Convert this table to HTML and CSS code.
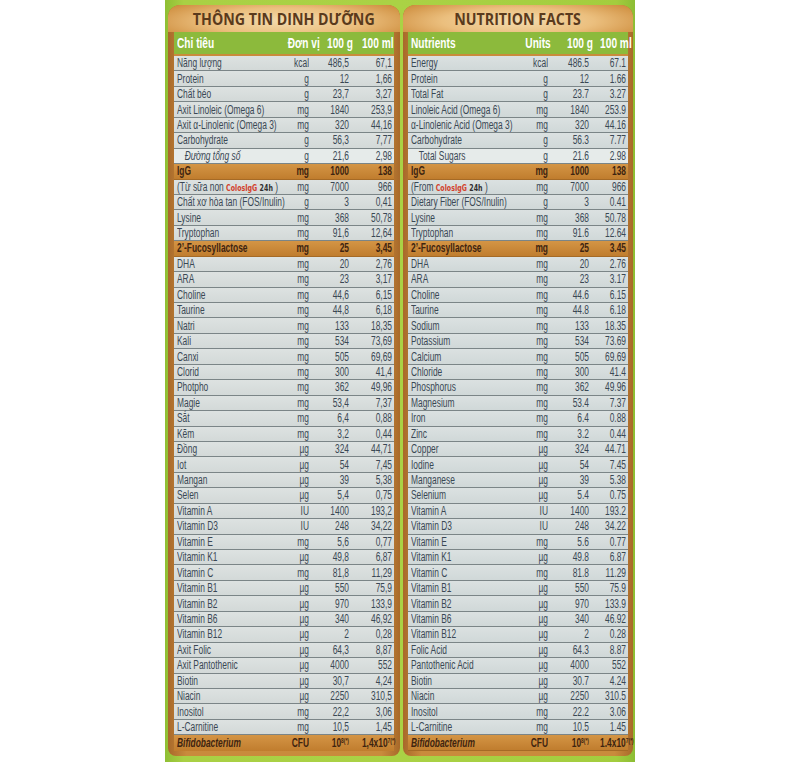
FILE: index.html
```html
<!DOCTYPE html>
<html lang="vi">
<head>
<meta charset="utf-8">
<title>Thông tin dinh dưỡng</title>
<link rel="stylesheet" href="styles.css">
</head>
<body>
<div class="page">
  <div class="panel">
    <section class="card card-left">
      <div class="title"><span>THÔNG TIN DINH DƯỠNG</span></div>
      <div class="row head"><span>Chỉ tiêu</span><span>Đơn vị</span><span>100 g</span><span>100 ml</span></div>
      <div class="row"><span>Năng lượng</span><span>kcal</span><span>486,5</span><span>67,1</span></div>
      <div class="row"><span>Protein</span><span>g</span><span>12</span><span>1,66</span></div>
      <div class="row"><span>Chất béo</span><span>g</span><span>23,7</span><span>3,27</span></div>
      <div class="row"><span>Axit Linoleic (Omega 6)</span><span>mg</span><span>1840</span><span>253,9</span></div>
      <div class="row"><span>Axit α-Linolenic (Omega 3)</span><span>mg</span><span>320</span><span>44,16</span></div>
      <div class="row"><span>Carbohydrate</span><span>g</span><span>56,3</span><span>7,77</span></div>
      <div class="row sub"><span>Đường tổng số</span><span>g</span><span>21,6</span><span>2,98</span></div>
      <div class="row hl"><span>IgG</span><span>mg</span><span>1000</span><span>138</span></div>
      <div class="row"><span>(Từ sữa non <i class="colos">ColosIgG</i> <b class="h24">24h</b> )</span><span>mg</span><span>7000</span><span>966</span></div>
      <div class="row"><span>Chất xơ hòa tan (FOS/Inulin)</span><span>g</span><span>3</span><span>0,41</span></div>
      <div class="row"><span>Lysine</span><span>mg</span><span>368</span><span>50,78</span></div>
      <div class="row"><span>Tryptophan</span><span>mg</span><span>91,6</span><span>12,64</span></div>
      <div class="row hl"><span>2’-Fucosyllactose</span><span>mg</span><span>25</span><span>3,45</span></div>
      <div class="row"><span>DHA</span><span>mg</span><span>20</span><span>2,76</span></div>
      <div class="row"><span>ARA</span><span>mg</span><span>23</span><span>3,17</span></div>
      <div class="row"><span>Choline</span><span>mg</span><span>44,6</span><span>6,15</span></div>
      <div class="row"><span>Taurine</span><span>mg</span><span>44,8</span><span>6,18</span></div>
      <div class="row"><span>Natri</span><span>mg</span><span>133</span><span>18,35</span></div>
      <div class="row"><span>Kali</span><span>mg</span><span>534</span><span>73,69</span></div>
      <div class="row"><span>Canxi</span><span>mg</span><span>505</span><span>69,69</span></div>
      <div class="row"><span>Clorid</span><span>mg</span><span>300</span><span>41,4</span></div>
      <div class="row"><span>Photpho</span><span>mg</span><span>362</span><span>49,96</span></div>
      <div class="row"><span>Magie</span><span>mg</span><span>53,4</span><span>7,37</span></div>
      <div class="row"><span>Sắt</span><span>mg</span><span>6,4</span><span>0,88</span></div>
      <div class="row"><span>Kẽm</span><span>mg</span><span>3,2</span><span>0,44</span></div>
      <div class="row"><span>Đồng</span><span>µg</span><span>324</span><span>44,71</span></div>
      <div class="row"><span>Iot</span><span>µg</span><span>54</span><span>7,45</span></div>
      <div class="row"><span>Mangan</span><span>µg</span><span>39</span><span>5,38</span></div>
      <div class="row"><span>Selen</span><span>µg</span><span>5,4</span><span>0,75</span></div>
      <div class="row"><span>Vitamin A</span><span>IU</span><span>1400</span><span>193,2</span></div>
      <div class="row"><span>Vitamin D3</span><span>IU</span><span>248</span><span>34,22</span></div>
      <div class="row"><span>Vitamin E</span><span>mg</span><span>5,6</span><span>0,77</span></div>
      <div class="row"><span>Vitamin K1</span><span>µg</span><span>49,8</span><span>6,87</span></div>
      <div class="row"><span>Vitamin C</span><span>mg</span><span>81,8</span><span>11,29</span></div>
      <div class="row"><span>Vitamin B1</span><span>µg</span><span>550</span><span>75,9</span></div>
      <div class="row"><span>Vitamin B2</span><span>µg</span><span>970</span><span>133,9</span></div>
      <div class="row"><span>Vitamin B6</span><span>µg</span><span>340</span><span>46,92</span></div>
      <div class="row"><span>Vitamin B12</span><span>µg</span><span>2</span><span>0,28</span></div>
      <div class="row"><span>Axit Folic</span><span>µg</span><span>64,3</span><span>8,87</span></div>
      <div class="row"><span>Axit Pantothenic</span><span>µg</span><span>4000</span><span>552</span></div>
      <div class="row"><span>Biotin</span><span>µg</span><span>30,7</span><span>4,24</span></div>
      <div class="row"><span>Niacin</span><span>µg</span><span>2250</span><span>310,5</span></div>
      <div class="row"><span>Inositol</span><span>mg</span><span>22,2</span><span>3,06</span></div>
      <div class="row"><span>L-Carnitine</span><span>mg</span><span>10,5</span><span>1,45</span></div>
      <div class="row hl last"><span class="bifido">Bifidobacterium</span><span>CFU</span><span>10<sup>8(*)</sup></span><span>1,4x10<sup>7(*)</sup></span></div>
    </section>

    <section class="card card-right">
      <div class="title"><span>NUTRITION FACTS</span></div>
      <div class="row head"><span>Nutrients</span><span>Units</span><span>100 g</span><span>100 ml</span></div>
      <div class="row"><span>Energy</span><span>kcal</span><span>486.5</span><span>67.1</span></div>
      <div class="row"><span>Protein</span><span>g</span><span>12</span><span>1.66</span></div>
      <div class="row"><span>Total Fat</span><span>g</span><span>23.7</span><span>3.27</span></div>
      <div class="row"><span>Linoleic Acid (Omega 6)</span><span>mg</span><span>1840</span><span>253.9</span></div>
      <div class="row"><span>α-Linolenic Acid (Omega 3)</span><span>mg</span><span>320</span><span>44.16</span></div>
      <div class="row"><span>Carbohydrate</span><span>g</span><span>56.3</span><span>7.77</span></div>
      <div class="row sub-en"><span>Total Sugars</span><span>g</span><span>21.6</span><span>2.98</span></div>
      <div class="row hl"><span>IgG</span><span>mg</span><span>1000</span><span>138</span></div>
      <div class="row"><span>(From <i class="colos">ColosIgG</i> <b class="h24">24h</b> )</span><span>mg</span><span>7000</span><span>966</span></div>
      <div class="row"><span>Dietary Fiber (FOS/Inulin)</span><span>g</span><span>3</span><span>0.41</span></div>
      <div class="row"><span>Lysine</span><span>mg</span><span>368</span><span>50.78</span></div>
      <div class="row"><span>Tryptophan</span><span>mg</span><span>91.6</span><span>12.64</span></div>
      <div class="row hl"><span>2’-Fucosyllactose</span><span>mg</span><span>25</span><span>3.45</span></div>
      <div class="row"><span>DHA</span><span>mg</span><span>20</span><span>2.76</span></div>
      <div class="row"><span>ARA</span><span>mg</span><span>23</span><span>3.17</span></div>
      <div class="row"><span>Choline</span><span>mg</span><span>44.6</span><span>6.15</span></div>
      <div class="row"><span>Taurine</span><span>mg</span><span>44.8</span><span>6.18</span></div>
      <div class="row"><span>Sodium</span><span>mg</span><span>133</span><span>18.35</span></div>
      <div class="row"><span>Potassium</span><span>mg</span><span>534</span><span>73.69</span></div>
      <div class="row"><span>Calcium</span><span>mg</span><span>505</span><span>69.69</span></div>
      <div class="row"><span>Chloride</span><span>mg</span><span>300</span><span>41.4</span></div>
      <div class="row"><span>Phosphorus</span><span>mg</span><span>362</span><span>49.96</span></div>
      <div class="row"><span>Magnesium</span><span>mg</span><span>53.4</span><span>7.37</span></div>
      <div class="row"><span>Iron</span><span>mg</span><span>6.4</span><span>0.88</span></div>
      <div class="row"><span>Zinc</span><span>mg</span><span>3.2</span><span>0.44</span></div>
      <div class="row"><span>Copper</span><span>µg</span><span>324</span><span>44.71</span></div>
      <div class="row"><span>Iodine</span><span>µg</span><span>54</span><span>7.45</span></div>
      <div class="row"><span>Manganese</span><span>µg</span><span>39</span><span>5.38</span></div>
      <div class="row"><span>Selenium</span><span>µg</span><span>5.4</span><span>0.75</span></div>
      <div class="row"><span>Vitamin A</span><span>IU</span><span>1400</span><span>193.2</span></div>
      <div class="row"><span>Vitamin D3</span><span>IU</span><span>248</span><span>34.22</span></div>
      <div class="row"><span>Vitamin E</span><span>mg</span><span>5.6</span><span>0.77</span></div>
      <div class="row"><span>Vitamin K1</span><span>µg</span><span>49.8</span><span>6.87</span></div>
      <div class="row"><span>Vitamin C</span><span>mg</span><span>81.8</span><span>11.29</span></div>
      <div class="row"><span>Vitamin B1</span><span>µg</span><span>550</span><span>75.9</span></div>
      <div class="row"><span>Vitamin B2</span><span>µg</span><span>970</span><span>133.9</span></div>
      <div class="row"><span>Vitamin B6</span><span>µg</span><span>340</span><span>46.92</span></div>
      <div class="row"><span>Vitamin B12</span><span>µg</span><span>2</span><span>0.28</span></div>
      <div class="row"><span>Folic Acid</span><span>µg</span><span>64.3</span><span>8.87</span></div>
      <div class="row"><span>Pantothenic Acid</span><span>µg</span><span>4000</span><span>552</span></div>
      <div class="row"><span>Biotin</span><span>µg</span><span>30.7</span><span>4.24</span></div>
      <div class="row"><span>Niacin</span><span>µg</span><span>2250</span><span>310.5</span></div>
      <div class="row"><span>Inositol</span><span>mg</span><span>22.2</span><span>3.06</span></div>
      <div class="row"><span>L-Carnitine</span><span>mg</span><span>10.5</span><span>1.45</span></div>
      <div class="row hl last"><span class="bifido">Bifidobacterium</span><span>CFU</span><span>10<sup>8(*)</sup></span><span>1.4x10<sup>7(*)</sup></span></div>
    </section>
  </div>
</div>
</body>
</html>
```

FILE: styles.css
```css
* { box-sizing: border-box; }

body {
  margin: 0;
  background: #ffffff;
  font-family: "Liberation Sans", Arial, sans-serif;
}

.page {
  width: 800px;
  height: 762px;
  display: flex;
  justify-content: center;
  overflow: hidden;
}

.panel {
  width: 470px;
  height: 762px;
  display: flex;
  gap: 3px;
  padding: 5px 2px 0 3px;
  background: linear-gradient(90deg, #8fbf34 0%, #a9d044 4%, #aad245 50%, #a3cd3e 96%, #8cbd34 100%);
}

.card {
  display: flex;
  flex-direction: column;
  height: 751px;
  padding: 0 6px 4px;
  border-radius: 12px 12px 8px 8px;
  background: linear-gradient(90deg, #a8692a, #c98b3c 8%, #c98b3c 92%, #a8692a);
}

.card-left { width: 232px; }
.card-right { width: 230px; padding: 0 5px 4px 5px; }

.title {
  height: 27px;
  margin: 0 -6px;
  display: flex;
  align-items: center;
  justify-content: center;
  border-radius: 12px 12px 0 0;
  background: radial-gradient(ellipse 60% 90% at 50% 60%, #f4dcae 0%, #ebbf7e 55%, #cf8f40 100%);
  color: #5a3a1c;
  font-family: "Open Sans", "Liberation Sans", sans-serif;
  font-weight: 700;
  font-size: 16.5px;
}

.title span {
  display: inline-block;
  white-space: nowrap;
  transform: scaleX(0.86);
  transform-origin: center;
}

.card-right .title { margin: 0 -5px; }

.row {
  display: grid;
  grid-template-columns: minmax(0, 1fr) 30px 40px 43px;
  align-items: center;
  height: 15.44px;
  padding: 0 2px 0 3px;
  background: linear-gradient(180deg, #dde2e1 0%, #d3d9d8 100%);
  border-bottom: 1px solid #7b8587;
  color: #3a4854;
  font-size: 12px;
  line-height: 1;
  white-space: nowrap;
}

.card-right .row {
  grid-template-columns: minmax(0, 1fr) 32px 41px 37px;
  background: linear-gradient(180deg, #dbe1e1 0%, #d0d8d8 100%);
}

.row span {
  display: block;
  text-align: right;
  transform: scaleX(0.7);
  transform-origin: right center;
}

.row span:first-child {
  text-align: left;
  transform-origin: left center;
}

.row.head {
  height: 24px;
  background: #8cba3c;
  border-bottom: 2px solid #c98b3c;
  color: #ffffff;
  font-weight: 700;
  font-size: 14.5px;
}

.row.head span { transform: scaleX(0.7); }
.row.head span:nth-child(2) { margin-right: 1px; }
.row.head span:nth-child(3) { margin-right: -4px; }

.row.sub { background: #e6ebea; }
.row.sub span:first-child { padding-left: 11px; font-style: italic; }

.card-right .row.sub-en { background: #e6ebea; }
.row.sub-en span:first-child { padding-left: 11px; }

.row.hl,
.card-right .row.hl {
  background: linear-gradient(180deg, #d49545 0%, #c07d2e 100%);
  border-bottom: 1px solid #a56a26;
  color: #3e2410;
  font-weight: 700;
}

.row.last { border-bottom: none; height: 16px; }

.bifido { font-style: italic; }

.row sup {
  font-size: 7px;
  vertical-align: 4px;
}

.colos {
  font-family: "DejaVu Sans", sans-serif;
  font-style: normal;
  font-weight: 700;
  font-size: 9px;
  color: #d2412c;
}

.h24 {
  font-family: "DejaVu Sans", sans-serif;
  font-size: 9px;
  color: #2f2f2f;
}
```
